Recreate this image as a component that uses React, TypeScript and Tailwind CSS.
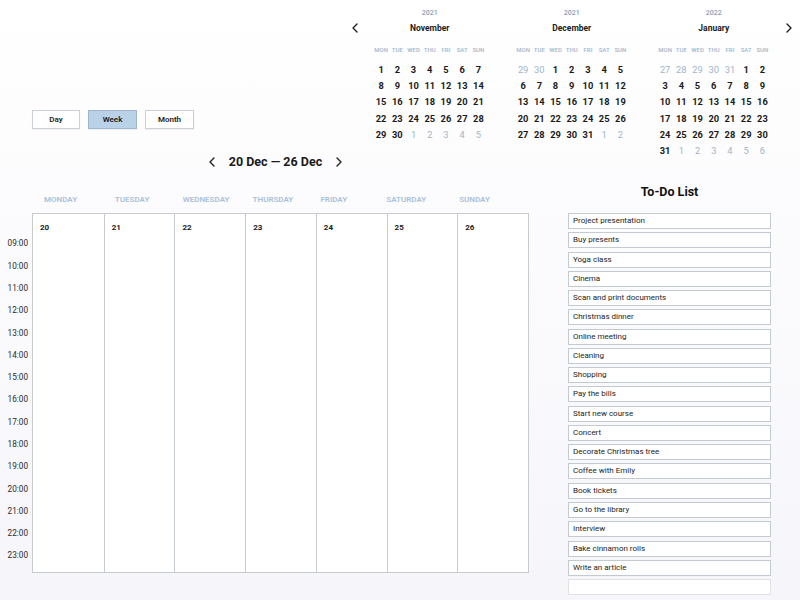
import React from "react";

type Cell = { d: number; cur: boolean };

function buildMonth(prevTail: number[], days: number, nextCount: number): Cell[][] {
  const cells: Cell[] = [];
  prevTail.forEach((d) => cells.push({ d, cur: false }));
  for (let i = 1; i <= days; i++) cells.push({ d: i, cur: true });
  for (let i = 1; i <= nextCount; i++) cells.push({ d: i, cur: false });
  const rows: Cell[][] = [];
  for (let i = 0; i < cells.length; i += 7) rows.push(cells.slice(i, i + 7));
  return rows;
}

const MONTHS = [
  { year: "2021", name: "November", rows: buildMonth([], 30, 5) },
  { year: "2021", name: "December", rows: buildMonth([29, 30], 31, 2) },
  { year: "2022", name: "January", rows: buildMonth([27, 28, 29, 30, 31], 31, 6) },
];

const WD = ["MON", "TUE", "WED", "THU", "FRI", "SAT", "SUN"];

const Chevron = ({ dir }: { dir: "l" | "r" }) => (
  <svg width="6" height="10" viewBox="0 0 6 10" fill="none">
    <path
      d={dir === "l" ? "M5 1 L1 5 L5 9" : "M1 1 L5 5 L1 9"}
      stroke="#222"
      strokeWidth="1.4"
      strokeLinecap="round"
      strokeLinejoin="round"
    />
  </svg>
);

function MiniCal({ year, name, rows }: { year: string; name: string; rows: Cell[][] }) {
  return (
    <div className="w-[113.5px] shrink-0 flex flex-col items-center pt-[8.3px]">
      <div className="leading-[10px] h-[10px] text-[7px] font-semibold text-[#8ea5bb]">{year}</div>
      <div className="mt-[2.4px] leading-[14px] h-[14px] text-[8.5px] font-bold text-[#1c1c1c]">{name}</div>
      <div className="mt-[10.3px] grid grid-cols-7 w-full h-[10px]">
        {WD.map((w) => (
          <div key={w} className="text-center leading-[10px] text-[6px] font-semibold text-[#a6bccf]">
            {w}
          </div>
        ))}
      </div>
      <div className="mt-[6.9px] w-full flex flex-col">
        {rows.map((r, i) => (
          <div key={i} className="grid grid-cols-7 h-[16.2px]">
            {r.map((c, j) => (
              <div
                key={j}
                className={
                  "flex items-center justify-center text-[9.3px] " +
                  (c.cur ? "font-bold text-[#1a1a1a]" : "font-normal text-[#9fb5ca]")
                }
              >
                {c.d}
              </div>
            ))}
          </div>
        ))}
      </div>
    </div>
  );
}

const DAYS = [
  { n: "MONDAY", pl: "pl-[12px]" },
  { n: "TUESDAY", pl: "pl-[12px]" },
  { n: "WEDNESDAY", pl: "pl-[9px]" },
  { n: "THURSDAY", pl: "pl-[8px]" },
  { n: "FRIDAY", pl: "pl-[5px]" },
  { n: "SATURDAY", pl: "pl-[0px]" },
  { n: "SUNDAY", pl: "pl-[2px]" },
];
const DATES = [20, 21, 22, 23, 24, 25, 26];
const TIMES = [
  "09:00", "10:00", "11:00", "12:00", "13:00", "14:00", "15:00", "16:00",
  "17:00", "18:00", "19:00", "20:00", "21:00", "22:00", "23:00",
];
const TODOS = [
  "Project presentation",
  "Buy presents",
  "Yoga class",
  "Cinema",
  "Scan and print documents",
  "Christmas dinner",
  "Online meeting",
  "Cleaning",
  "Shopping",
  "Pay the bills",
  "Start new course",
  "Concert",
  "Decorate Christmas tree",
  "Coffee with Emily",
  "Book tickets",
  "Go to the library",
  "Interview",
  "Bake cinnamon rolls",
  "Write an article",
];

export default function App() {
  return (
    <div
      className="w-[800px] h-[600px] overflow-hidden bg-linear-to-b from-[#ffffff] to-[#f6f5fa] text-[#1c1c1c] flex flex-col"
      style={{ fontFamily: "Roboto, 'Liberation Sans', sans-serif" }}
    >
      {/* Top section */}
      <div className="h-[150px] flex flex-row">
        <div className="w-[340px] shrink-0 pt-[110px] pl-[32px] flex flex-row gap-[8px]">
          <button className="w-[48px] h-[19px] border border-[#cbd0d6] bg-white text-[8px] font-semibold text-[#1c1c1c] shadow-[0_1px_1px_rgba(0,0,0,0.05)]">
            Day
          </button>
          <button className="w-[49px] h-[19px] border border-[#9fb6cc] bg-[#b9d2e8] text-[8px] font-semibold text-[#1c1c1c] shadow-[0_1px_1px_rgba(0,0,0,0.05)]">
            Week
          </button>
          <button className="w-[49px] h-[19px] border border-[#cbd0d6] bg-white text-[8px] font-semibold text-[#1c1c1c] shadow-[0_1px_1px_rgba(0,0,0,0.05)]">
            Month
          </button>
        </div>
        <div className="flex flex-row items-start shrink-0">
          <div className="w-[30px] h-[56px] shrink-0 flex items-center justify-center">
            <Chevron dir="l" />
          </div>
          <div className="ml-[3px] flex flex-row gap-[28.5px] shrink-0">
            {MONTHS.map((m) => (
              <MiniCal key={m.name} {...m} />
            ))}
          </div>
          <div className="ml-[3.5px] w-[30px] h-[56px] shrink-0 flex items-center justify-center">
            <Chevron dir="r" />
          </div>
        </div>
      </div>

      {/* Bottom section */}
      <div className="flex flex-row flex-1">
        <div className="w-[540px] shrink-0 flex flex-col">
          <div className="h-[24px] pl-[32px] pr-[21px] flex flex-row items-center justify-center">
            <Chevron dir="l" />
            <span className="mx-[14px] text-[12.5px] font-bold text-[#1a1a1a] whitespace-pre">
              20 Dec — 26 Dec
            </span>
            <Chevron dir="r" />
          </div>
          <div className="mt-[19px] h-[14px] ml-[32px] w-[496px] grid grid-cols-7">
            {DAYS.map((d) => (
              <div
                key={d.n}
                className={"leading-[14px] text-[8px] font-semibold text-[#a9c1d8] " + d.pl}
              >
                {d.n}
              </div>
            ))}
          </div>
          <div className="mt-[6px] flex flex-row">
            <div className="w-[32px] pr-[4px] pt-[19.5px] flex flex-col">
              {TIMES.map((t) => (
                <div key={t} className="h-[22.29px] flex items-center justify-end text-[8.2px] text-[#2a2a2a]">
                  {t}
                </div>
              ))}
            </div>
            <div className="w-[497px] h-[360px] border border-[#c6cbd0] grid grid-cols-7 bg-white">
              {DATES.map((d, i) => (
                <div
                  key={d}
                  className={"pl-[7px] pt-[9px] " + (i > 0 ? "border-l border-[#c6cbd0]" : "")}
                >
                  <div className="leading-[10px] text-[8px] font-bold text-[#1a1a1a]">{d}</div>
                </div>
              ))}
            </div>
          </div>
        </div>

        <div className="pl-[28px] pt-[33px] flex flex-col w-[231px]">
          <div className="w-[203px] text-center leading-[18px] text-[12.5px] font-bold text-[#111]">
            To-Do List
          </div>
          <div className="mt-[12px] w-[203px] flex flex-col gap-[3.28px]">
            {TODOS.map((t) => (
              <div
                key={t}
                className="h-[16px] border border-[#c3cad1] bg-white pl-[4px] flex items-center text-[8px] text-[#1c1c1c] leading-none"
              >
                {t}
              </div>
            ))}
            <div className="h-[16px] border border-[#dfe3e7] bg-white" />
          </div>
        </div>
      </div>
    </div>
  );
}
